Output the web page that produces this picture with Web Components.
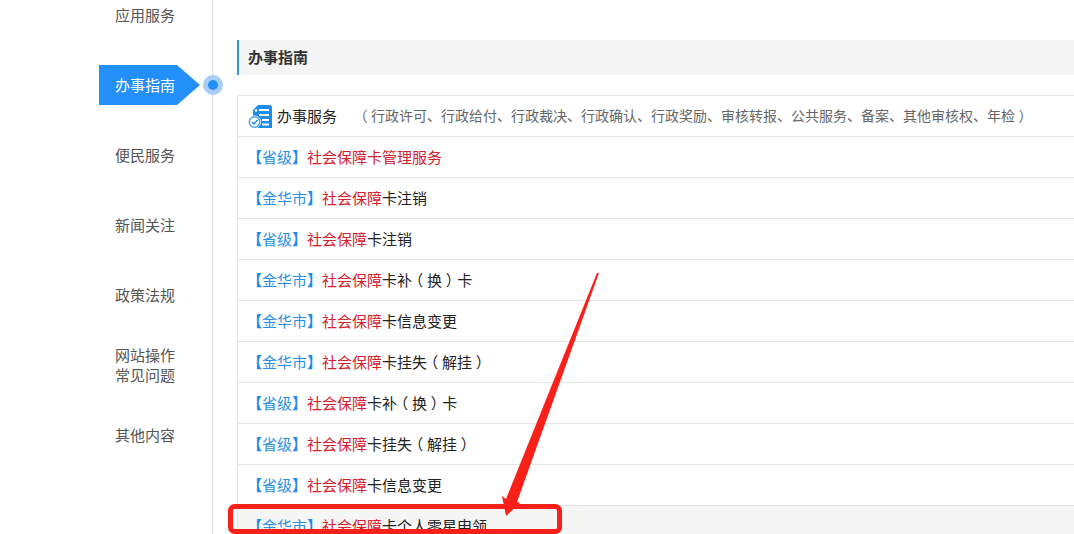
<!DOCTYPE html>
<html lang="zh-CN">
<head>
<meta charset="utf-8">
<title>办事指南</title>
<style>
  html, body { margin: 0; height: 534px; overflow: hidden; background: #fff; }
  body { font-family: "Noto Sans CJK SC", "Liberation Sans", sans-serif; }
  /* the reference font centres round brackets in their box, Noto pushes them to one side */
  .paren { display: inline-block; padding: 0 .25em; font-feature-settings: "halt"; }
</style>
</head>
<body>
<guide-page>
  <side-nav slot="nav">
    <nav-item>应用服务</nav-item>
    <nav-item active>办事指南</nav-item>
    <nav-item>便民服务</nav-item>
    <nav-item>新闻关注</nav-item>
    <nav-item>政策法规</nav-item>
    <nav-item>网站操作<br>常见问题</nav-item>
    <nav-item>其他内容</nav-item>
  </side-nav>
  <section-title>办事指南</section-title>
  <service-table>
    <service-head detail="行政许可、行政给付、行政裁决、行政确认、行政奖励、审核转报、公共服务、备案、其他审核权、年检">办事服务</service-head>
    <service-row region="省级" keyword="社会保障卡管理服务"></service-row>
    <service-row region="金华市" keyword="社会保障">卡注销</service-row>
    <service-row region="省级" keyword="社会保障">卡注销</service-row>
    <service-row region="金华市" keyword="社会保障">卡补<span class="paren">（</span>换<span class="paren">）</span>卡</service-row>
    <service-row region="金华市" keyword="社会保障">卡信息变更</service-row>
    <service-row region="金华市" keyword="社会保障">卡挂失<span class="paren">（</span>解挂<span class="paren">）</span></service-row>
    <service-row region="省级" keyword="社会保障">卡补<span class="paren">（</span>换<span class="paren">）</span>卡</service-row>
    <service-row region="省级" keyword="社会保障">卡挂失<span class="paren">（</span>解挂<span class="paren">）</span></service-row>
    <service-row region="省级" keyword="社会保障">卡信息变更</service-row>
    <service-row region="金华市" keyword="社会保障" hover>卡个人零星申领</service-row>
  </service-table>
  <red-markup slot="overlay"></red-markup>
</guide-page>

<script>
class GuidePage extends HTMLElement {
  constructor() {
    super();
    this.attachShadow({ mode: 'open' });
    this.shadowRoot.innerHTML = `
      <style>
        :host {
          display: flex;
          position: relative;
          width: 1074px;
          height: 534px;
          overflow: hidden;
        }
        .side {
          flex: 0 0 212px;
          border-right: 1px solid #ddd;
        }
        .main {
          flex: 1;
          min-width: 0;
          display: flex;
          flex-direction: column;
          gap: 20px;
          padding: 40px 0 0 24px;
        }
      </style>
      <div class="side"><slot name="nav"></slot></div>
      <div class="main"><slot></slot></div>
      <slot name="overlay"></slot>
    `;
  }
}

class SideNav extends HTMLElement {
  constructor() {
    super();
    this.attachShadow({ mode: 'open' });
    this.shadowRoot.innerHTML = `
      <style>
        :host {
          display: flex;
          flex-direction: column;
          margin-top: -20px;
          padding-left: 99px;
        }
      </style>
      <slot></slot>
    `;
  }
}

class NavItem extends HTMLElement {
  constructor() {
    super();
    this.attachShadow({ mode: 'open' });
    this.shadowRoot.innerHTML = `
      <style>
        :host {
          display: flex;
          align-items: center;
          position: relative;
          height: 70px;
          font-size: 15px;
          line-height: 20px;
          color: #555;
        }
        .label {
          box-sizing: border-box;
          width: 101px;
          height: 40px;
          padding-left: 16px;
          display: flex;
          align-items: center;
        }
        :host([active]) .label {
          color: #fff;
          background: #2390fa;
          clip-path: polygon(0 0, 78px 0, 101px 50%, 78px 100%, 0 100%);
        }
        .dot { display: none; }
        :host([active]) .dot {
          display: block;
          position: absolute;
          left: 104px;
          top: 25px;
          width: 10px;
          height: 10px;
          border: 5px solid #a9cdf6;
          border-radius: 50%;
          background: #2390fa;
        }
      </style>
      <div class="label"><span><slot></slot></span></div>
      <span class="dot"></span>
    `;
  }
}

class SectionTitle extends HTMLElement {
  constructor() {
    super();
    this.attachShadow({ mode: 'open' });
    this.shadowRoot.innerHTML = `
      <style>
        :host {
          display: flex;
          flex: none;
          align-items: center;
          box-sizing: border-box;
          height: 35px;
          padding: 0 0 3px 9px;
          border-left: 2px solid #3b8fd8;
          background: #f5f5f5;
          color: #333;
          font-size: 15px;
          font-weight: 700;
        }
      </style>
      <slot></slot>
    `;
  }
}

class ServiceTable extends HTMLElement {
  constructor() {
    super();
    this.attachShadow({ mode: 'open' });
    this.shadowRoot.innerHTML = `
      <style>
        :host {
          display: block;
          flex: none;
          border-left: 1px solid #e5e5e5;
          border-top: 1px solid #e5e5e5;
        }
      </style>
      <slot></slot>
    `;
  }
}

class ServiceHead extends HTMLElement {
  constructor() {
    super();
    this.attachShadow({ mode: 'open' });
    this.shadowRoot.innerHTML = `
      <style>
        :host {
          display: flex;
          align-items: center;
          box-sizing: border-box;
          height: 41px;
          padding: 0 0 2px 10px;
          border-bottom: 1px solid #e5e5e5;
          color: #222;
          font-size: 15px;
          white-space: nowrap;
        }
        svg { flex: none; width: 25px; height: 25px; margin: 2px 4px 0 0; }
        .detail { margin-left: 20px; font-size: 14px; color: #666; }
        .paren { display: inline-block; padding: 0 .25em; font-feature-settings: "halt"; }
      </style>
      <svg viewBox="0 0 25 25" aria-hidden="true">
        <path fill="#1f8ce8" d="M10 1h11.500a2.500 2.500 0 0 1 2.500 2.500V24H5V6z"/>
        <circle cx="8" cy="6.500" r="1.300" fill="#fff"/>
        <path fill="#fff" d="M11 5h10v2H11zM11 10h10v2H11zM14 15h7v2h-7zM14 19.500h7v2h-7z"/>
        <circle cx="6.500" cy="18" r="6.500" fill="#fff"/>
        <circle cx="6.500" cy="18" r="5.200" fill="none" stroke="#4aa3ef" stroke-width="1.400"/>
        <path fill="none" stroke="#1f8ce8" stroke-width="1.400" d="M4 18l2 2 3.500-4"/>
      </svg>
      <span class="name"><slot></slot></span>
      <span class="detail"><span class="paren">（</span><span class="text"></span><span class="paren">）</span></span>
    `;
  }

  connectedCallback() {
    this.shadowRoot.querySelector('.text').textContent = this.getAttribute('detail');
  }
}

class ServiceRow extends HTMLElement {
  constructor() {
    super();
    this.attachShadow({ mode: 'open' });
    this.shadowRoot.innerHTML = `
      <style>
        :host {
          display: flex;
          align-items: center;
          box-sizing: border-box;
          height: 41px;
          padding: 0 0 2px 9px;
          border-bottom: 1px solid #e5e5e5;
          color: #222;
          font-size: 15px;
          white-space: nowrap;
        }
        :host([hover]) { background: #f5f5f5; }
        .region { color: #2a8fdf; }
        .region b { color: #1e8ce8; font-weight: 700; }
        .keyword { color: #d3212f; }
      </style>
      <span class="region"><b>【</b><span class="name"></span><b>】</b></span><span class="keyword"></span><span><slot></slot></span>
    `;
  }

  connectedCallback() {
    this.shadowRoot.querySelector('.name').textContent = this.getAttribute('region');
    this.shadowRoot.querySelector('.keyword').textContent = this.getAttribute('keyword');
  }
}

// hand-drawn annotation lying over the screenshot
class RedMarkup extends HTMLElement {
  constructor() {
    super();
    this.attachShadow({ mode: 'open' });
    this.shadowRoot.innerHTML = `
      <style>
        :host {
          position: absolute;
          left: 0;
          top: 0;
          width: 1074px;
          height: 534px;
          pointer-events: none;
        }
        svg { display: block; }
      </style>
      <svg width="1074" height="534" viewBox="0 0 1074 534" aria-hidden="true">
        <rect x="230.500" y="506.500" width="329" height="25" rx="4" fill="none" stroke="#f9201a" stroke-width="5"/>
        <path fill="#f9201a" d="M597 273h2L517 502l3 1-14 13-4-20 4 3z"/>
      </svg>
    `;
  }
}

customElements.define('guide-page', GuidePage);
customElements.define('side-nav', SideNav);
customElements.define('nav-item', NavItem);
customElements.define('section-title', SectionTitle);
customElements.define('service-table', ServiceTable);
customElements.define('service-head', ServiceHead);
customElements.define('service-row', ServiceRow);
customElements.define('red-markup', RedMarkup);
</script>
</body>
</html>
